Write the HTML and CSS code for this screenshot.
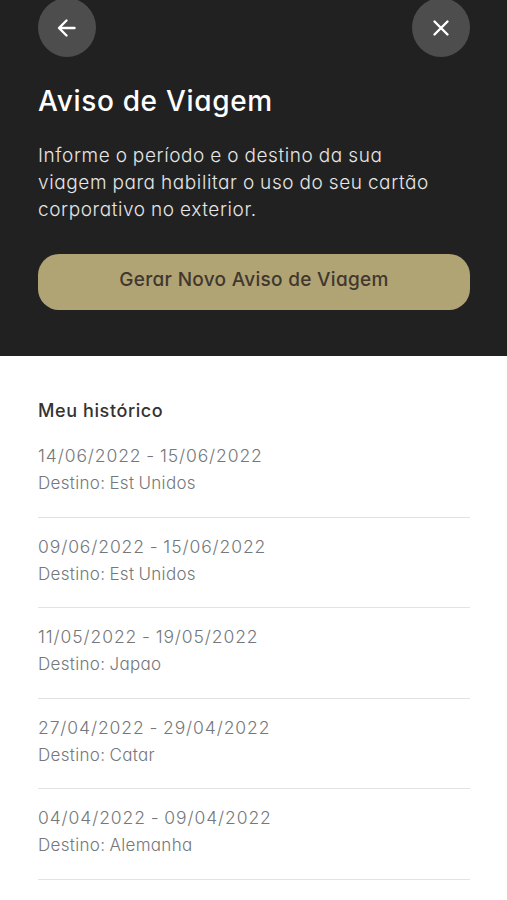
FILE: index.html
```html
<!DOCTYPE html>
<html lang="pt-BR">
<head>
  <meta charset="UTF-8" />
  <meta name="viewport" content="width=device-width, initial-scale=1.0" />
  <title>Aviso de Viagem</title>
  <link rel="stylesheet" href="styles.css">
</head>
<body>
  <header class="topo">
    <nav class="nav">
      <button class="btn-icone" aria-label="Voltar">
        <svg width="20" height="20" viewBox="0 0 20 20"><path d="M17.500 10H2.500M9.500 2.500L2 10l7.500 7.500" /></svg>
      </button>
      <button class="btn-icone" aria-label="Fechar">
        <svg width="20" height="20" viewBox="0 0 20 20"><path d="M3.500 3.500l13 13M16.500 3.500l-13 13" /></svg>
      </button>
    </nav>
    <h1>Aviso de Viagem</h1>
    <p class="intro">
      Informe o período e o destino da sua<br>
      viagem para habilitar o uso do seu cartão<br>
      corporativo no exterior.
    </p>
    <button class="btn-novo">Gerar Novo Aviso de Viagem</button>
  </header>

  <main class="historico">
    <h2>Meu histórico</h2>
    <ul>
      <li><p class="data">14/06/2022 - 15/06/2022</p><p>Destino: Est Unidos</p></li>
      <li><p class="data">09/06/2022 - 15/06/2022</p><p>Destino: Est Unidos</p></li>
      <li><p class="data">11/05/2022 - 19/05/2022</p><p>Destino: Japao</p></li>
      <li><p class="data">27/04/2022 - 29/04/2022</p><p>Destino: Catar</p></li>
      <li><p class="data">04/04/2022 - 09/04/2022</p><p>Destino: Alemanha</p></li>
    </ul>
  </main>
</body>
</html>
```
FILE: styles.css
```css
* {
  box-sizing: border-box;
  margin: 0;
  padding: 0;
}
body {
  font-family: Inter, sans-serif;
  font-feature-settings: "cv11";
  background: #fff;
  height: 900px;
  overflow: hidden;
}
.topo {
  display: flow-root;
  height: 356px;
  padding: 0 37px 0 38px;
  background: #212121;
  color: #fff;
}
.nav {
  display: flex;
  justify-content: space-between;
  margin-top: -2px;
}
.btn-icone {
  display: flex;
  align-items: center;
  justify-content: center;
  width: 58px;
  height: 59px;
  border: 0;
  border-radius: 50%;
  background: #4d4d4d;
}
.btn-icone svg {
  fill: none;
  stroke: #fff;
  stroke-width: 2.4;
  stroke-linecap: round;
  stroke-linejoin: round;
}
h1 {
  margin-top: 25px;
  font-size: 28px;
  line-height: 38px;
  font-weight: 500;
  letter-spacing: 0.68px;
}
.intro {
  margin-top: 22px;
  font-size: 19px;
  line-height: 27px;
  font-weight: 300;
  letter-spacing: 0.6px;
  word-spacing: -0.6px;
  color: #e6e6e6;
  white-space: nowrap;
}
.btn-novo {
  display: block;
  width: 100%;
  height: 56px;
  margin-top: 31px;
  padding-bottom: 5px;
  border: 0;
  border-radius: 21px;
  background: #b0a474;
  color: #40372f;
  font-family: inherit;
  font-feature-settings: inherit;
  font-size: 19px;
  font-weight: 500;
  letter-spacing: 0.3px;
}
.historico {
  padding: 41px 37px 0 38px;
  color: #74787b;
}
h2 {
  font-size: 18px;
  line-height: 27px;
  font-weight: 500;
  letter-spacing: 0.6px;
  color: #333;
}
ul {
  margin-top: 3px;
  list-style: none;
}
li {
  height: 90.6px;
  padding-top: 15px;
  border-bottom: 1px solid #e2e2e3;
  font-size: 17px;
  line-height: 28px;
  font-weight: 300;
  letter-spacing: 0.32px;
  word-spacing: -1px;
}
.data {
  font-size: 17.5px;
  line-height: 27px;
  letter-spacing: 0.9px;
}
```
